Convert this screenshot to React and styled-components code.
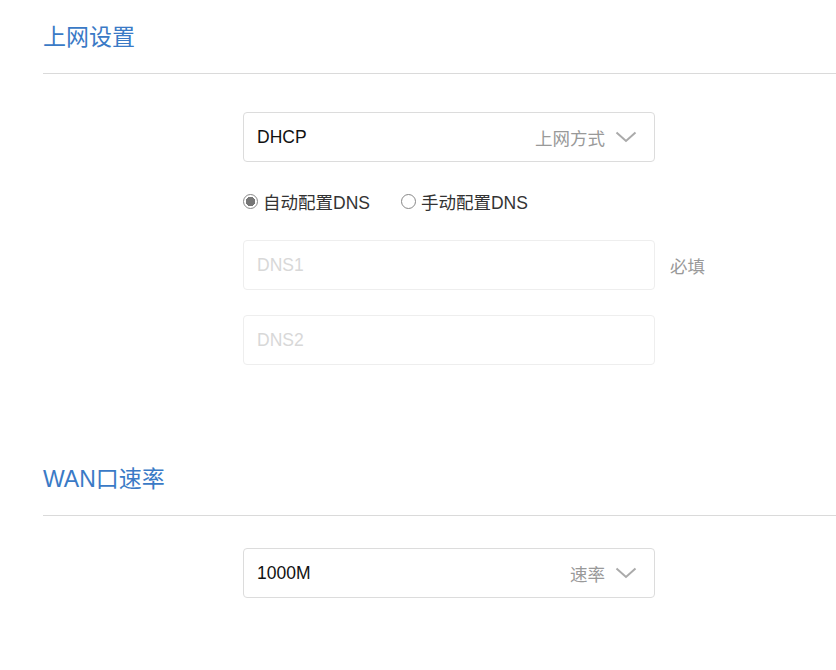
import React from "react";
import styled, { createGlobalStyle } from "styled-components";

const COLORS = {
    blue: "#3a7ac6",
    text: "#222",
    gray: "#999",
    light: "#d8d8d8",
    border: "#dcdcdc",
    borderLight: "#eeeeee",
    rule: "#dadada",
};

const GlobalStyle = createGlobalStyle`
    body {
        margin: 0;
        background: #fff;
        font-family: "Liberation Sans", "Noto Sans CJK SC", sans-serif;
        color: ${COLORS.text};
    }
`;

const Chevron = () => (
    <svg width="22" height="12" viewBox="0 0 22 12" fill="none">
        <path d="M1.5 1.5 L11 10 L20.5 1.5" stroke="#aaa" strokeWidth="2" />
    </svg>
);

const Select = ({ value, hint }) => (
    <SelectBox>
        <Value>{value}</Value>
        <Hint>{hint}</Hint>
        <Chevron />
    </SelectBox>
);

const Radio = ({ checked, label }) => (
    <RadioLabel>
        <Circle $checked={checked} />
        {label}
    </RadioLabel>
);

const App = () => (
    <Page>
        <GlobalStyle />
        <Section>
            <Header>上网设置</Header>
            <Form $top={38}>
                <Select value="DHCP" hint="上网方式" />
                <RadioRow>
                    <Radio checked label="自动配置DNS" />
                    <Radio label="手动配置DNS" />
                </RadioRow>
                <FieldRow>
                    <Input placeholder="DNS1" disabled />
                    <Note>必填</Note>
                </FieldRow>
                <FieldRow>
                    <Input placeholder="DNS2" disabled />
                </FieldRow>
            </Form>
        </Section>
        <Section $top={77}>
            <Header>WAN口速率</Header>
            <Form $top={32}>
                <Select value="1000M" hint="速率" />
            </Form>
        </Section>
    </Page>
);

const Page = styled.div`
    padding-left: 43px;
`;

const Section = styled.section`
    padding-top: ${(p) => p.$top || 0}px;
`;

const Header = styled.h2`
    margin: 0;
    padding: 20px 0 19px;
    line-height: 34px;
    font-size: 23px;
    font-weight: 400;
    color: ${COLORS.blue};
    border-bottom: 1px solid ${COLORS.rule};
`;

const Form = styled.div`
    margin: ${(p) => p.$top}px 0 0 200px;
    display: flex;
    flex-direction: column;
`;

const SelectBox = styled.div`
    box-sizing: border-box;
    width: 412px;
    height: 50px;
    border: 1px solid ${COLORS.border};
    border-radius: 4px;
    display: flex;
    align-items: center;
    padding: 0 17px 0 13px;
    font-size: 17.5px;
`;

const Value = styled.span`
    flex: 1;
    color: #111;
`;

const Hint = styled.span`
    color: ${COLORS.gray};
    margin-right: 10px;
`;

const RadioRow = styled.div`
    display: flex;
    align-items: center;
    gap: 31px;
    height: 38px;
    margin: 20px 0;
`;

const RadioLabel = styled.label`
    display: flex;
    align-items: center;
    gap: 5px;
    font-size: 17.5px;
    color: #333;
`;

const Circle = styled.span`
    box-sizing: border-box;
    width: 15px;
    height: 15px;
    border-radius: 50%;
    border: 1px solid #888;
    background: ${(p) =>
        p.$checked ? "radial-gradient(circle, #777 0 4.5px, #fff 5px)" : "#fff"};
`;

const FieldRow = styled.div`
    display: flex;
    align-items: center;
    gap: 15px;
    & + & {
        margin-top: 25px;
    }
`;

const Input = styled.input`
    box-sizing: border-box;
    width: 412px;
    height: 50px;
    border: 1px solid ${COLORS.borderLight};
    border-radius: 4px;
    background: #fff;
    padding: 0 13px;
    font-family: inherit;
    font-size: 17.5px;
    outline: none;

    &::placeholder {
        color: ${COLORS.light};
    }
`;

const Note = styled.span`
    font-size: 17.5px;
    color: ${COLORS.gray};
`;

export default App;
